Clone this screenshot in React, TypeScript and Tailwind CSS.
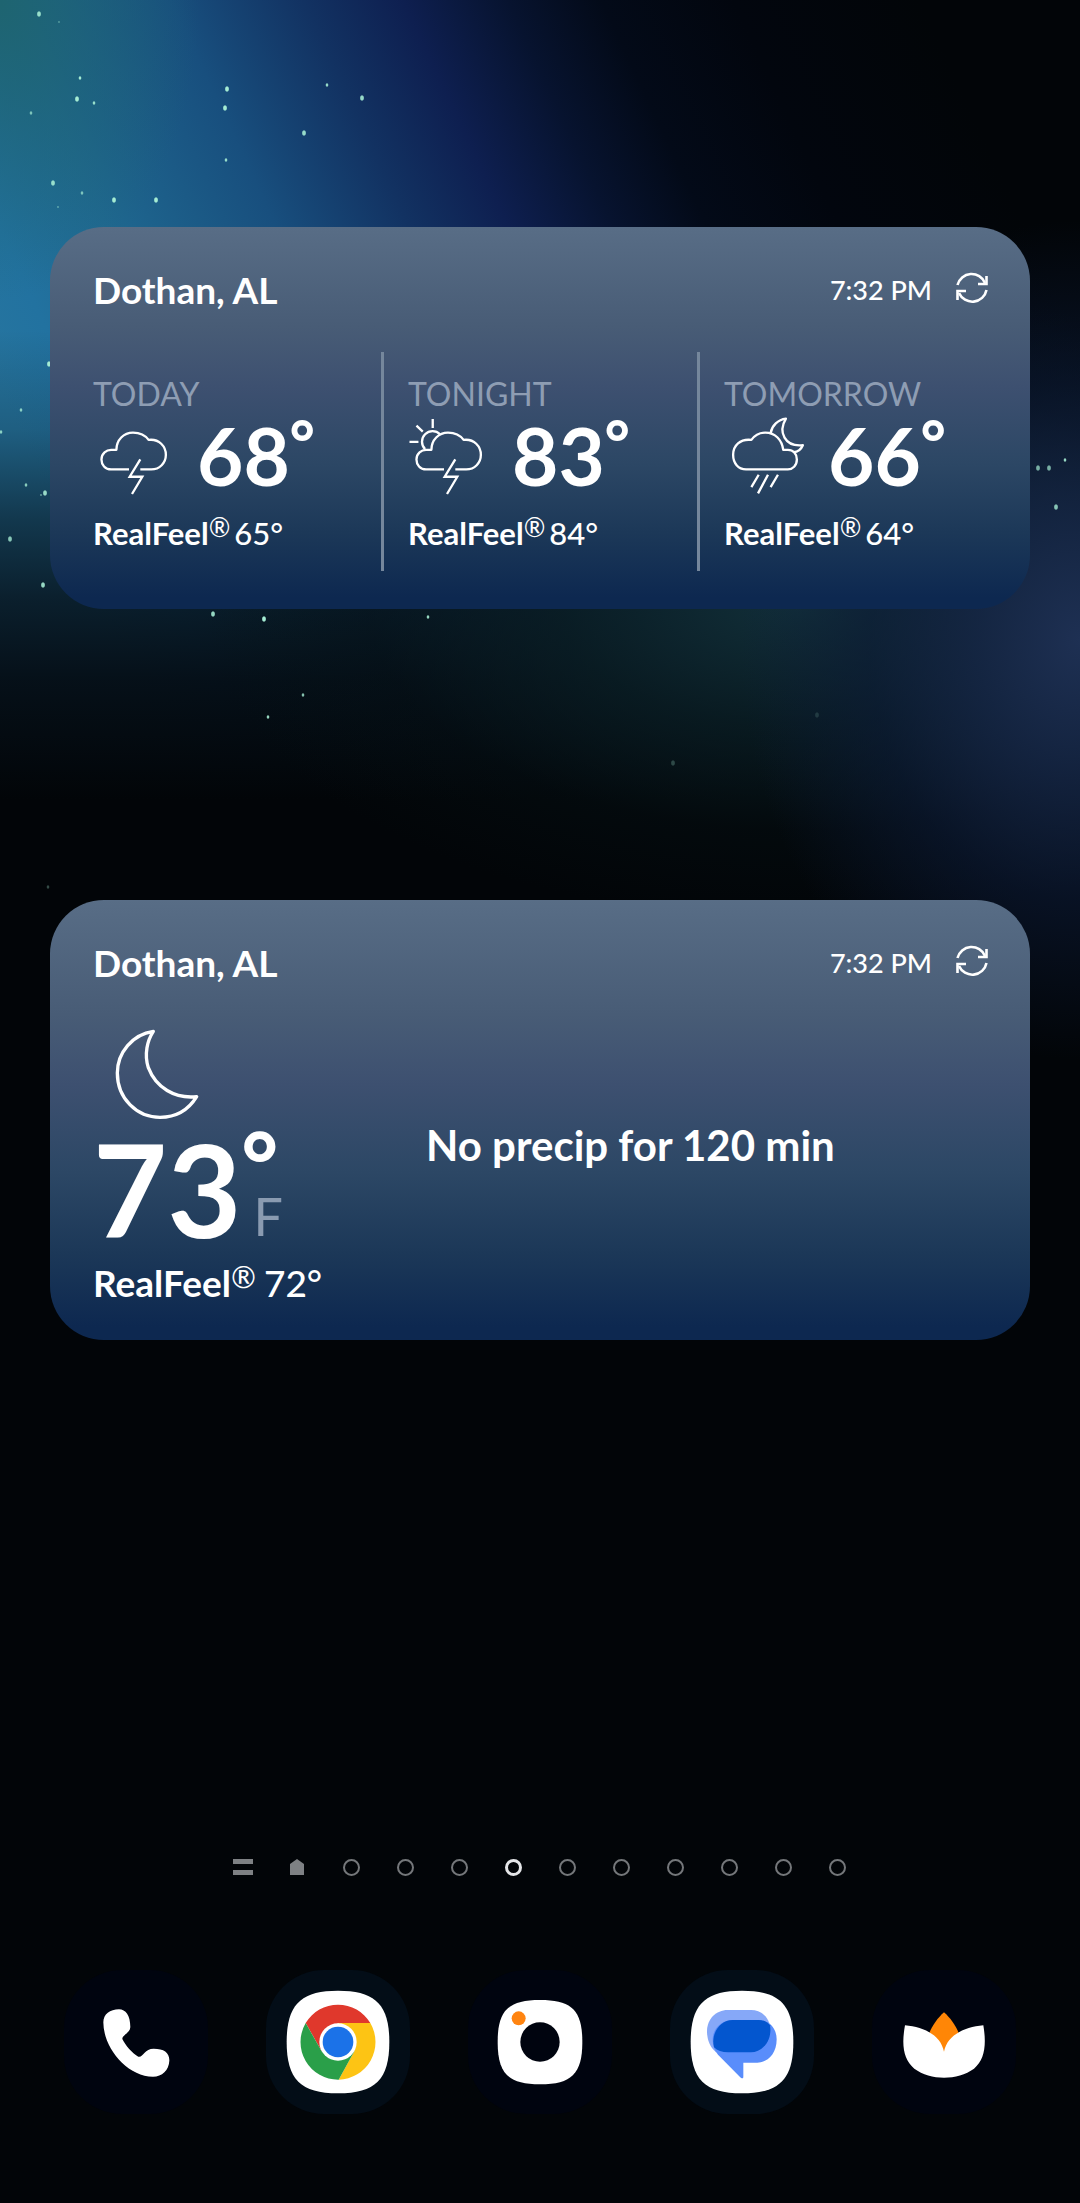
import type { ReactNode } from "react";

const STARS: [number, number, number, number][] = [
  [39, 14, 3, 0.9], [59, 22, 1, 0.6], [80, 78, 2, 1], [77, 99, 3, 1], [94, 103, 2, 0.9],
  [31, 113, 2, 0.7], [227, 89, 3, 1], [225, 108, 3, 1], [327, 85, 2, 0.9], [362, 98, 3, 0.9],
  [304, 133, 3, 0.9], [226, 160, 2, 0.9], [53, 183, 3, 0.9], [82, 193, 2, 0.7], [114, 200, 3, 1],
  [156, 200, 3, 1], [58, 207, 1, 0.7], [49, 364, 3, 1], [21, 410, 2, 0.8], [1, 432, 2, 0.8],
  [26, 485, 2, 0.8], [45, 493, 3, 0.9], [41, 495, 1, 0.8], [10, 539, 3, 0.8], [43, 585, 3, 0.9],
  [213, 614, 3, 0.9], [264, 619, 3, 1], [428, 617, 2, 0.9], [303, 695, 2, 0.8], [268, 717, 2, 0.9],
  [1038, 468, 3, 0.7], [1049, 468, 3, 0.7], [1065, 460, 2, 0.9], [1056, 507, 3, 0.8],
  [673, 763, 3, 0.25], [817, 715, 3, 0.15], [48, 887, 2, 0.3],
];

function Sky() {
  return (
    <div
      aria-hidden="true"
      className="pointer-events-none absolute inset-x-0 top-0 h-[1100px] bg-[radial-gradient(ellipse_340px_420px_at_100%_640px,#1e3053_0%,#162747d9_30%,#0d1c3a8c_62%,transparent_100%),radial-gradient(ellipse_600px_320px_at_74%_600px,#12303a_0%,#0b2228b3_40%,#0614184d_72%,transparent_100%),radial-gradient(ellipse_200px_300px_at_0_0,#1e6470_0%,#1e647080_45%,transparent_100%),linear-gradient(180deg,transparent_330px,#02050a33_430px,#02050a8c_520px,#02050ac4_600px,#02050ae6_680px,#020508_800px),linear-gradient(65deg,#26759f_0px,#26759f_300px,#2272a0_368px,#1f6890_465px,#184f7e_619px,#123262_740px,#0e1f50_830px,#07132f_925px,#030a18_1010px,#02060e_1130px,#020508_1300px)]"
    >
      <svg className="absolute top-0 left-0" width="1080" height="900">
        {STARS.map(([x, y, r, o]) => (
          <ellipse key={`${x}-${y}`} cx={x} cy={y} rx={r * 0.65} ry={r * 0.9} fill="#a5ecd3" opacity={o} />
        ))}
      </svg>
    </div>
  );
}

function WeatherIcon({ viewBox, children }: { viewBox: string; children: ReactNode }) {
  return (
    <svg
      className="h-[83px] w-20 shrink-0 overflow-visible"
      viewBox={viewBox}
      fill="none"
      stroke="white"
      strokeWidth="7"
      strokeLinejoin="round"
      aria-hidden="true"
    >
      {children}
    </svg>
  );
}

const CLOUD =
  "M238 747H184C166 747 155 733 155 717C155 698 170 688 184 688H200C200 658 222 636 250 636C271 636 287 644 297 658C329 654 349 678 349 703C349 728 330 747 305 747H272";
const BOLT = "M272 717L240 769H278L247 821";

const StormIcon = () => (
  <WeatherIcon viewBox="130 580 240 250">
    <path d={CLOUD} />
    <path d={BOLT} strokeLinejoin="miter" />
  </WeatherIcon>
);

const SunStormIcon = () => (
  <WeatherIcon viewBox="130 580 240 250">
    <path d={CLOUD} />
    <path d={BOLT} strokeLinejoin="miter" />
    <path d="M181 686A30 30 0 0 1 226 641M204 595V622M155 615L174 633M134 664H161" />
  </WeatherIcon>
);

const MoonRainIcon = () => (
  <WeatherIcon viewBox="546 580 240 250">
    <path d="M612 747C588 747 573 728 573 703C573 675 594 654 628 658C638 644 652 636 670 636C700 636 720 658 724 688H738C754 688 765 700 765 717C765 735 752 747 738 747Z" />
    <path d="M686 637C690 615 708 597 732 594C708 634 728 680 783 674C778 686 768 694 755 695" />
    <path d="M650 763L628 800M678 763L648 819M708 763L686 800" />
  </WeatherIcon>
);

function RefreshIcon() {
  return (
    <svg className="size-8" viewBox="0 0 32 32" fill="none" stroke="white" strokeWidth="2.6" aria-hidden="true">
      <path d="M1.500 13A14.500 14.500 0 0 1 29 11" />
      <path d="M30.500 4V12H22" />
      <path d="M30.500 18A14.500 14.500 0 0 1 3 21" />
      <path d="M1.500 28V19H10" />
    </svg>
  );
}

function CardHeader() {
  return (
    <header className="flex h-10 items-center justify-between">
      <h2 className="text-[37px] leading-10 font-bold">Dothan, AL</h2>
      <div className="flex items-center gap-6">
        <time className="text-[27px] leading-10 font-medium">7:32 PM</time>
        <button type="button" aria-label="Refresh" className="mb-1">
          <RefreshIcon />
        </button>
      </div>
    </header>
  );
}

function Card({ label, children }: { label: string; children: ReactNode }) {
  return (
    <section
      aria-label={label}
      className="rounded-[54px] bg-[linear-gradient(180deg,#586d86_0%,#485c76_26%,#3d5070_42%,#2c4765_62%,#1c3858_80%,#0d2850_97%)] pt-[43px] pr-[42px] pl-[43px]"
    >
      <CardHeader />
      {children}
    </section>
  );
}

function Forecast({ label, icon, temp, feels }: { label: string; icon: ReactNode; temp: number; feels: number }) {
  return (
    <div className="pt-[22px] pb-[18px]">
      <h3 className="text-[32px] leading-10 text-[#8e9db3]">{label}</h3>
      <div className="flex gap-6">
        {icon}
        <p className="flex text-[80px] leading-[83px] font-bold">
          {temp}
          <span className="text-[60px] leading-[56px] font-black">°</span>
        </p>
      </div>
      <p className="mt-4 flex text-[31px] leading-10 font-bold">
        RealFeel
        <span className="text-[26px] leading-7 font-normal">®</span>
        <span className="ml-1 font-medium">{feels}°</span>
      </p>
    </div>
  );
}

function Dock() {
  const tile = "grid size-[144px] place-items-center rounded-[58px]";
  return (
    <nav aria-label="Apps" className="flex items-center justify-between px-16">
      <button type="button" aria-label="Phone" className={`${tile} bg-[#00040f]`}>
        <svg className="size-[144px]" viewBox="71 61 432 432" aria-hidden="true">
          <path
            fill="#fff"
            d="M236 179C256 179 270 198 270 232C270 250 246 255 246 268C254 286 277 312 294 321C308 325 312 297 340 297C371 297 388 309 387 333C386 361 365 381 338 381C260 381 189 294 189 218C189 194 209 179 236 179Z"
          />
        </svg>
      </button>
      <button type="button" aria-label="Chrome" className={`${tile} bg-[#030d17]`}>
        <svg className="size-[144px]" viewBox="-216 -216 432 432" aria-hidden="true">
          <path fill="#fff" d="M0-154C112-154 154-112 154 0S112 154 0 154S-154 112-154 0S-112-154 0-154Z" />
          <path fill="#e0382c" d="M-97-57A113 113 0 0 1 97-57H0L-49 28Z" />
          <path fill="#fdc414" d="M97-57A113 113 0 0 1 2 113L49 28L0-57Z" />
          <path fill="#2a9f49" d="M2 113A113 113 0 0 1-97-57L-49 28L49 28Z" />
          <circle r="56" fill="#fff" />
          <circle r="46" fill="#1b72e8" />
        </svg>
      </button>
      <button type="button" aria-label="Camera" className={`${tile} bg-[#00040f]`}>
        <svg className="size-[144px]" viewBox="-216 -216 432 432" aria-hidden="true">
          <path fill="#fff" d="M0-126C95-126 127-95 127 0S95 127 0 127S-127 95-127 0S-95-126 0-126Z" />
          <circle r="59" fill="#00040f" />
          <circle cx="-64" cy="-71" r="21" fill="#ff8410" />
        </svg>
      </button>
      <button type="button" aria-label="Messages" className={`${tile} bg-[#030d17]`}>
        <svg className="size-[144px]" viewBox="-216 -216 432 432" aria-hidden="true">
          <path fill="#fff" d="M0-154C112-154 154-112 154 0S112 154 0 154S-154 112-154 0S-112-154 0-154Z" />
          <path fill="#86a8f8" d="M-43-96H27C60-96 84-72 86-35C80 0 50 31 27 31H-78C-96 15-105-6-105-33C-105-68-78-96-43-96Z" />
          <path fill="#598dfb" d="M-28-66H50C80-66 104-42 104-8C104 36 76 62 46 62H4V104C4 112-2 109-6 105L-72 38C-84 24-88 6-88-6C-88-40-62-66-28-66Z" />
          <path fill="#0356cf" d="M-28-66H50C66-66 78-58 84-50C92-4 60 31 27 31H-42C-60 31-74 26-84 16C-94-26-66-66-28-66Z" />
        </svg>
      </button>
      <button type="button" aria-label="Gallery" className={`${tile} bg-[#00040f]`}>
        <svg className="size-[144px]" viewBox="996 61 432 432" aria-hidden="true">
          <path fill="#ff8606" d="M1212 188C1230 204 1247 227 1256 250L1212 310L1168 250C1177 227 1194 204 1212 188Z" />
          <path
            fill="#fff"
            d="M1095 227C1150 232 1202 255 1212 306C1222 255 1275 232 1330 227C1340 286 1334 330 1302 357C1252 393 1172 393 1123 357C1090 330 1084 286 1095 227Z"
          />
        </svg>
      </button>
    </nav>
  );
}

function PageIndicator() {
  return (
    <div role="group" aria-label="Home screens" className="flex items-center justify-center">
      <div className="grid h-5 w-[54px] place-items-center">
        <div className="h-4 w-5 border-y-[5px] border-[#7e8184]" />
      </div>
      <div className="grid h-5 w-[54px] place-items-center">
        <svg className="h-4 w-[14px]" viewBox="0 0 14 16" fill="#7e8184" aria-hidden="true">
          <path d="M7 0L14 5V16H0V5Z" />
        </svg>
      </div>
      {Array.from({ length: 10 }, (_, i) => (
        <button key={i} type="button" aria-label={`Page ${i + 1}`} className="grid h-5 w-[54px] place-items-center">
          <span
            className={
              i === 3
                ? "size-[17px] rounded-full border-[3px] border-[#e4e6e8]"
                : "size-[17px] rounded-full border-2 border-[#74777a]"
            }
          />
        </button>
      ))}
    </div>
  );
}

export default function App() {
  return (
    <main className="relative isolate flex min-h-screen flex-col overflow-hidden bg-[#020508] pb-[89px] font-['Lato','Liberation_Sans',sans-serif] text-white">
      <Sky />
      <div className="relative flex flex-col gap-[291px] px-[50px] pt-[227px]">
        <Card label="Three part forecast">
          <div className="mt-[42px] grid grid-cols-[288px_316px_1fr] pb-[38px]">
            <Forecast label="TODAY" icon={<StormIcon />} temp={68} feels={65} />
            <div className="border-l-3 border-[#75879c] pl-6">
              <Forecast label="TONIGHT" icon={<SunStormIcon />} temp={83} feels={84} />
            </div>
            <div className="border-l-3 border-[#75879c] pl-6">
              <Forecast label="TOMORROW" icon={<MoonRainIcon />} temp={66} feels={64} />
            </div>
          </div>
        </Card>
        <Card label="Current conditions">
          <div className="grid grid-cols-[333px_1fr] items-center pb-[34px]">
            <div className="pt-[46px]">
              <svg
                className="ml-[22px] h-[91px] w-[84px]"
                viewBox="197 420 252 273"
                fill="none"
                stroke="white"
                strokeWidth="10"
                strokeLinejoin="round"
                aria-hidden="true"
              >
                <path d="M312 427C250 436 204 490 204 552C204 628 262 685 332 685C380 685 418 662 442 623C376 630 320 596 297 536C284 496 294 454 312 427Z" />
              </svg>
              <div className="mt-[22px] flex h-[94px]">
                <p className="text-[128px] leading-[94px] font-bold">73</p>
                <div className="flex flex-col justify-between">
                  <span className="text-[88px] leading-10 font-black">°</span>
                  <span className="pl-3 text-[52px] leading-10 text-[#8a9bb1]">F</span>
                </div>
              </div>
              <p className="mt-6 flex text-[37px] leading-[46px] font-bold">
                RealFeel
                <span className="text-3xl leading-8 font-normal">®</span>
                <span className="ml-2 font-medium">72°</span>
              </p>
            </div>
            <p className="text-[42px] leading-[50px] font-bold">No precip for 120 min</p>
          </div>
        </Card>
      </div>
      <div className="relative mt-auto flex flex-col gap-[93px]">
        <PageIndicator />
        <Dock />
      </div>
    </main>
  );
}
